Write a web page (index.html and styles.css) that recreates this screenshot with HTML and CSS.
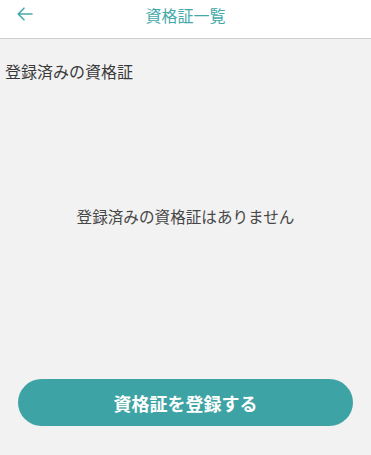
FILE: index.html
```html
<!DOCTYPE html>
<html lang="ja">
<head>
<meta charset="utf-8">
<link rel="stylesheet" href="styles.css">
</head>
<body>
<div class="app">
  <header class="header">
    <button class="back" aria-label="戻る">
      <svg width="16" height="14" viewBox="0 0 16 14" fill="none" stroke="#45a9ab" stroke-width="1.6" stroke-linecap="round" stroke-linejoin="round">
        <path d="M15 7H1.5M7 1.2L1.2 7L7 12.8"/>
      </svg>
    </button>
    <h1 class="title">資格証一覧</h1>
  </header>
  <main class="content">
    <h2 class="section-title">登録済みの資格証</h2>
    <p class="empty">登録済みの資格証はありません</p>
  </main>
  <div class="footer">
    <button class="register">資格証を登録する</button>
  </div>
</div>
</body>
</html>
```
FILE: styles.css
```css
html, body {
  margin: 0;
  padding: 0;
  height: 100%;
}
body {
  font-family: "Noto Sans CJK JP", "Noto Sans", sans-serif;
  background: #f2f2f2;
  color: #333;
}
.app {
  display: flex;
  flex-direction: column;
  height: 100vh;
}
.header {
  position: relative;
  height: 38px;
  background: #fff;
  border-bottom: 1px solid #cfcfcf;
  display: flex;
  align-items: center;
  justify-content: center;
  flex-shrink: 0;
}
.back {
  position: absolute;
  left: 16px;
  top: 6px;
  border: 0;
  background: none;
  padding: 0;
  width: 18px;
  height: 16px;
  display: flex;
  align-items: center;
  justify-content: center;
}
.title {
  margin: 0;
  margin-top: -8px;
  font-size: 16px;
  font-weight: 400;
  color: #45a9ab;
}
.content {
  flex: 1;
  display: flex;
  flex-direction: column;
}
.section-title {
  margin: 20px 0 0 5px;
  font-size: 16px;
  font-weight: 400;
  color: #3a3a3a;
  line-height: 24px;
}
.empty {
  margin: 121px 0 0 0;
  text-align: center;
  font-size: 15.6px;
  color: #474747;
  line-height: 24px;
}
.footer {
  padding: 0 18px 29px 18px;
  flex-shrink: 0;
}
.register {
  width: 100%;
  height: 47px;
  border: 0;
  border-radius: 24px;
  background: #3ea3a4;
  color: #fff;
  font-family: "Noto Sans CJK JP", "Noto Sans", sans-serif;
  font-weight: 700;
  font-size: 18px;
}
```
